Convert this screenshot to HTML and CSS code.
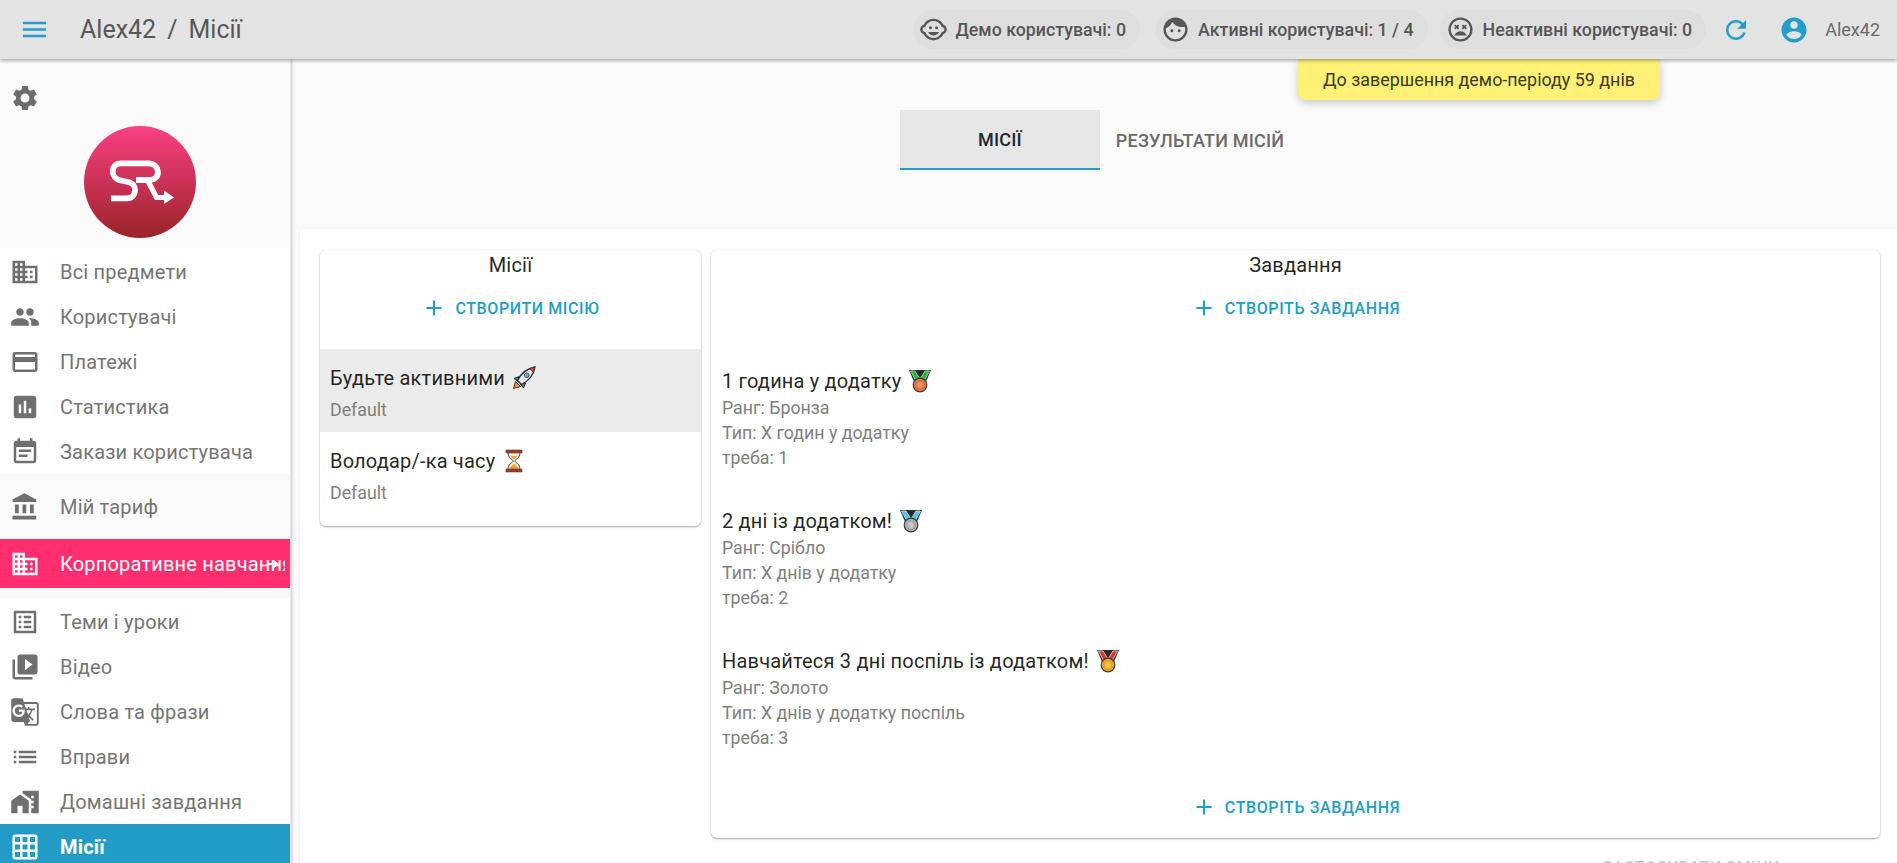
FILE: index.html
```html
<!DOCTYPE html>
<html lang="uk">
<head>
    <meta charset="UTF-8">
    <meta name="viewport" content="width=device-width, initial-scale=1.0">
    <title>Місії</title>
    <link rel="stylesheet" href="styles.css">
</head>
<body>
    <header class="topbar">
        <svg class="menu-icon" viewBox="0 0 24 24"><path d="M3 18h18v-2H3v2zm0-5h18v-2H3v2zm0-7v2h18V6H3z"/></svg>
        <div class="page-title"><span>Alex42</span><span>/</span><span>Місії</span></div>
        <div class="topbar-right">
            <div class="chip chip-demo">
                <svg viewBox="0 0 24 24"><circle cx="14.5" cy="10.5" r="1.25"/><circle cx="9.5" cy="10.5" r="1.25"/><path d="M16.5 14h-9c.76 1.77 2.49 3 4.5 3s3.74-1.23 4.5-3z"/><path d="M22.94 12.66c.04-.21.06-.43.06-.66s-.02-.45-.06-.66c-.25-1.51-1.36-2.74-2.81-3.17-.53-1.12-1.28-2.1-2.19-2.91C16.36 3.85 14.28 3 12 3s-4.36.85-5.94 2.26c-.92.81-1.67 1.8-2.19 2.91-1.45.43-2.56 1.65-2.81 3.17-.04.21-.06.43-.06.66s.02.45.06.66c.25 1.51 1.36 2.74 2.81 3.17.52 1.11 1.27 2.09 2.17 2.89C7.62 20.14 9.71 21 12 21s4.38-.86 5.97-2.28c.9-.8 1.65-1.79 2.17-2.89 1.44-.43 2.55-1.65 2.8-3.17zM19 14c-.1 0-.19-.02-.29-.03-.2.67-.49 1.29-.86 1.86C16.6 17.74 14.45 19 12 19s-4.6-1.26-5.85-3.17c-.37-.57-.66-1.19-.86-1.86-.1.01-.19.03-.29.03-1.1 0-2-.9-2-2s.9-2 2-2c.1 0 .19.02.29.03.2-.67.49-1.29.86-1.86C7.4 6.26 9.55 5 12 5s4.6 1.26 5.85 3.17c.37.57.66 1.19.86 1.86.1-.01.19-.03.29-.03 1.1 0 2 .9 2 2s-.9 2-2 2z"/></svg>
                <span>Демо користувачі: 0</span>
            </div>
            <div class="chip chip-active">
                <svg viewBox="0 0 24 24"><path d="M9 11.75c-.69 0-1.25.56-1.25 1.25s.56 1.25 1.25 1.25 1.25-.56 1.25-1.25-.56-1.25-1.25-1.25zm6 0c-.69 0-1.25.56-1.25 1.25s.56 1.25 1.25 1.25 1.25-.56 1.25-1.25-.56-1.25-1.25-1.25zM12 2C6.48 2 2 6.48 2 12s4.48 10 10 10 10-4.48 10-10S17.52 2 12 2zm0 18c-4.41 0-8-3.59-8-8 0-.29.02-.58.05-.86 2.36-1.05 4.23-2.98 5.21-5.37C11.07 8.33 14.05 10 17.42 10c.78 0 1.53-.09 2.25-.26.21.71.33 1.47.33 2.26 0 4.41-3.59 8-8 8z"/></svg>
                <span>Активні користувачі: 1 / 4</span>
            </div>
            <div class="chip chip-inactive">
                <svg viewBox="0 0 24 24"><path d="M12 13.5c-2.33 0-4.31 1.46-5.11 3.5h10.22c-.8-2.04-2.78-3.5-5.11-3.5zM7.82 12l1.06-1.06L9.94 12 11 10.94 9.94 9.88 11 8.82 9.94 7.76 8.88 8.82 7.82 7.76 6.76 8.82l1.06 1.06-1.06 1.06zm4.17-10C6.47 2 2 6.47 2 12s4.47 10 9.99 10S22 17.53 22 12 17.51 2 11.99 2zM12 20c-4.42 0-8-3.58-8-8s3.58-8 8-8 8 3.58 8 8-3.58 8-8 8zm4.18-12.24l-1.06 1.06-1.06-1.06L13 8.82l1.06 1.06L13 10.94 14.06 12l1.06-1.06L16.18 12l1.06-1.06-1.06-1.06 1.06-1.06z"/></svg>
                <span>Неактивні користувачі: 0</span>
            </div>
            <svg class="refresh-icon" viewBox="0 0 24 24"><path d="M17.65 6.35C16.2 4.9 14.21 4 12 4c-4.42 0-7.99 3.58-7.99 8s3.57 8 7.99 8c3.73 0 6.84-2.55 7.73-6h-2.08c-.82 2.33-3.04 4-5.65 4-3.31 0-6-2.69-6-6s2.69-6 6-6c1.66 0 3.14.69 4.22 1.78L13 11h7V4l-2.35 2.35z"/></svg>
            <svg class="account-icon" viewBox="0 0 24 24"><path d="M12 2C6.48 2 2 6.48 2 12s4.48 10 10 10 10-4.48 10-10S17.52 2 12 2zm0 3c1.66 0 3 1.34 3 3s-1.34 3-3 3-3-1.34-3-3 1.34-3 3-3zm0 14.2c-2.5 0-4.71-1.28-6-3.22.03-1.99 4-3.08 6-3.08 1.99 0 5.97 1.09 6 3.08-1.29 1.94-3.5 3.22-6 3.22z"/></svg>
            <span class="account-name">Alex42</span>
        </div>
    </header>

    <div class="demo-notice">До завершення демо-періоду 59 днів</div>

    <div class="layout">
        <aside class="sidebar">
            <div class="sidebar-head">
                <svg class="settings-icon" viewBox="0 0 24 24"><path d="M19.14 12.94c.04-.3.06-.61.06-.94 0-.32-.02-.64-.07-.94l2.03-1.58c.18-.14.23-.41.12-.61l-1.92-3.32c-.12-.22-.37-.29-.59-.22l-2.39.96c-.5-.38-1.03-.7-1.62-.94l-.36-2.54c-.04-.24-.24-.41-.48-.41h-3.84c-.24 0-.43.17-.47.41l-.36 2.54c-.59.24-1.13.57-1.62.94l-2.39-.96c-.22-.08-.47 0-.59.22L2.74 8.87c-.12.21-.08.47.12.61l2.03 1.58c-.05.3-.09.63-.09.94s.02.64.07.94l-2.03 1.58c-.18.14-.23.41-.12.61l1.92 3.32c.12.22.37.29.59.22l2.39-.96c.5.38 1.03.7 1.62.94l.36 2.54c.05.24.24.41.48.41h3.84c.24 0 .44-.17.47-.41l.36-2.54c.59-.24 1.13-.56 1.62-.94l2.39.96c.22.08.47 0 .59-.22l1.92-3.32c.12-.22.07-.47-.12-.61l-2.01-1.58zM12 15.6c-1.98 0-3.6-1.62-3.6-3.6s1.62-3.6 3.6-3.6 3.6 1.62 3.6 3.6-1.62 3.6-3.6 3.6z"/></svg>
                <svg class="logo" viewBox="0 0 112 112">
                    <defs>
                        <linearGradient id="logo-bg" x1="0" y1="0" x2="0" y2="1">
                            <stop offset="0" stop-color="#fb3f84"/>
                            <stop offset="1" stop-color="#9a2428"/>
                        </linearGradient>
                    </defs>
                    <circle cx="56" cy="56" r="56" fill="url(#logo-bg)"/>
                    <path d="M27 72.300H43C53 72.300 54 57.500 44 56L37 54.500C26 52.500 26 37.300 37 37.300H64C76.500 37.300 77.500 54 65.500 54H52" fill="none" stroke="#fff" stroke-width="5.800"/>
                    <path d="M63.500 54L72.500 71.500H82" fill="none" stroke="#fff" stroke-width="5.200"/>
                    <path d="M80 64.500L90 71.500L80 78Z" fill="#fff"/>
                </svg>
            </div>

            <nav class="menu-group">
                <a class="menu-item"><svg viewBox="0 0 24 24"><path d="M12 7V3H2v18h20V7H12zM6 19H4v-2h2v2zm0-4H4v-2h2v2zm0-4H4V9h2v2zm0-4H4V5h2v2zm4 12H8v-2h2v2zm0-4H8v-2h2v2zm0-4H8V9h2v2zm0-4H8V5h2v2zm10 12h-8v-2h2v-2h-2v-2h2v-2h-2V9h8v10zm-2-8h-2v2h2v-2zm0 4h-2v2h2v-2z"/></svg><span>Всі предмети</span></a>
                <a class="menu-item"><svg viewBox="0 0 24 24"><path d="M16 11c1.66 0 2.99-1.34 2.99-3S17.66 5 16 5c-1.66 0-3 1.34-3 3s1.34 3 3 3zm-8 0c1.66 0 2.99-1.34 2.99-3S9.66 5 8 5C6.34 5 5 6.34 5 8s1.34 3 3 3zm0 2c-2.33 0-7 1.17-7 3.5V19h14v-2.5c0-2.33-4.67-3.5-7-3.5zm8 0c-.29 0-.62.02-.97.05 1.16.84 1.97 1.97 1.97 3.45V19h6v-2.5c0-2.33-4.67-3.5-7-3.5z"/></svg><span>Користувачі</span></a>
                <a class="menu-item"><svg viewBox="0 0 24 24"><path d="M20 4H4c-1.11 0-1.99.89-1.99 2L2 18c0 1.11.89 2 2 2h16c1.11 0 2-.89 2-2V6c0-1.11-.89-2-2-2zm0 14H4v-6h16v6zm0-10H4V6h16v2z"/></svg><span>Платежі</span></a>
                <a class="menu-item"><svg viewBox="0 0 24 24"><path d="M19 3H5c-1.1 0-2 .9-2 2v14c0 1.1.9 2 2 2h14c1.1 0 2-.9 2-2V5c0-1.1-.9-2-2-2zM9 17H7v-7h2v7zm4 0h-2V7h2v10zm4 0h-2v-4h2v4z"/></svg><span>Статистика</span></a>
                <a class="menu-item"><svg viewBox="0 0 24 24"><path d="M17 10H7v2h10v-2zm2-7h-1V1h-2v2H8V1H6v2H5c-1.11 0-1.99.9-1.99 2L3 19c0 1.1.89 2 2 2h14c1.1 0 2-.9 2-2V5c0-1.1-.9-2-2-2zm0 16H5V8h14v11zm-5-5H7v2h7v-2z"/></svg><span>Закази користувача</span></a>
            </nav>

            <div class="menu-plan">
                <a class="menu-item"><svg viewBox="0 0 24 24"><path d="M4 10v7h3v-7H4zm6 0v7h3v-7h-3zM2 22h19v-3H2v3zm14-12v7h3v-7h-3zm-4.5-9L2 6v2h19V6l-9.5-5z"/></svg><span>Мій тариф</span></a>
            </div>

            <a class="menu-item menu-corporate">
                <svg viewBox="0 0 24 24"><path d="M12 7V3H2v18h20V7H12zM6 19H4v-2h2v2zm0-4H4v-2h2v2zm0-4H4V9h2v2zm0-4H4V5h2v2zm4 12H8v-2h2v2zm0-4H8v-2h2v2zm0-4H8V9h2v2zm0-4H8V5h2v2zm10 12h-8v-2h2v-2h-2v-2h2v-2h-2V9h8v10zm-2-8h-2v2h2v-2zm0 4h-2v2h2v-2z"/></svg>
                <span>Корпоративне навчання</span>
                <svg class="corporate-arrow" viewBox="0 0 12 8"><path d="M0 3h7V0l5 4-5 4V5H0z"/></svg>
            </a>
            <div class="menu-spacer"></div>

            <nav class="menu-group">
                <a class="menu-item"><svg viewBox="0 0 24 24"><path d="M19 5v14H5V5h14m1.1-2H3.9c-.5 0-.9.4-.9.9v16.2c0 .4.4.9.9.9h16.2c.4 0 .9-.5.9-.9V3.9c0-.5-.5-.9-.9-.9zM11 7h6v2h-6V7zm0 4h6v2h-6v-2zm0 4h6v2h-6zM7 7h2v2H7zm0 4h2v2H7zm0 4h2v2H7z"/></svg><span>Теми і уроки</span></a>
                <a class="menu-item"><svg viewBox="0 0 24 24"><path d="M4 6H2v14c0 1.1.9 2 2 2h14v-2H4V6zm16-4H8c-1.1 0-2 .9-2 2v12c0 1.1.9 2 2 2h12c1.1 0 2-.9 2-2V4c0-1.1-.9-2-2-2zm-8 12.5v-9l6 4.5-6 4.5z"/></svg><span>Відео</span></a>
                <a class="menu-item"><svg viewBox="0 0 24 24"><path d="M21 4H11l-1-3H3c-1.1 0-2 .9-2 2v15c0 1.1.9 2 2 2h8l1 3h9c1.1 0 2-.9 2-2V6c0-1.1-.9-2-2-2zM7 16c-2.76 0-5-2.24-5-5s2.24-5 5-5c1.35 0 2.48.5 3.35 1.3L9.03 8.57c-.38-.36-1.04-.78-2.03-.78-1.74 0-3.15 1.44-3.15 3.21S5.26 14.21 7 14.21c2.01 0 2.84-1.44 2.92-2.41H7v-1.71h4.68c.07.31.12.61.12 1.02C11.8 13.97 9.89 16 7 16zm6.17-5.42h3.7c-.43 1.25-1.11 2.43-2.05 3.47-.31-.35-.6-.72-.86-1.1l-.79-2.37zm8.33 9.92c0 .55-.45 1-1 1H14l2-2.5-1.04-3.1 3.1 3.1.92-.92-3.3-3.25.02-.02c1.13-1.25 1.93-2.69 2.4-4.22H20v-1.3h-4.53V8h-1.29v1.29h-1.44L11.46 5.5h9.04c.55 0 1 .45 1 1v14z"/></svg><span>Слова та фрази</span></a>
                <a class="menu-item"><svg viewBox="0 0 24 24"><path d="M3 13h2v-2H3v2zm0 4h2v-2H3v2zm0-8h2V7H3v2zm4 4h14v-2H7v2zm0 4h14v-2H7v2zM7 7v2h14V7H7z"/></svg><span>Вправи</span></a>
                <a class="menu-item"><svg viewBox="0 0 24 24"><path d="M1 11v10h5v-6h4v6h5V11L8 6z"/><path d="M10 3v1.97l7 5V11h2v2h-2v2h2v2h-2v4h6V3H10zm9 6h-2V7h2v2z"/></svg><span>Домашні завдання</span></a>
            </nav>

            <a class="menu-item menu-active"><svg viewBox="0 0 24 24"><path d="M20 2H4c-1.1 0-2 .9-2 2v16c0 1.1.9 2 2 2h16c1.1 0 2-.9 2-2V4c0-1.1-.9-2-2-2zM8 20H4v-4h4v4zm0-6H4v-4h4v4zm0-6H4V4h4v4zm6 12h-4v-4h4v4zm0-6h-4v-4h4v4zm0-6h-4V4h4v4zm6 12h-4v-4h4v4zm0-6h-4v-4h4v4zm0-6h-4V4h4v4z"/></svg><span>Місії</span></a>
        </aside>

        <main class="content">
            <div class="tabs">
                <div class="tab tab-selected">Місії</div>
                <div class="tab">Результати місій</div>
            </div>

            <section class="panel">
                <div class="panel-columns">
                    <div class="card card-missions">
                        <div class="card-title">Місії</div>
                        <button class="add-button"><svg viewBox="0 0 24 24"><path d="M19 13h-6v6h-2v-6H5v-2h6V5h2v6h6v2z"/></svg>Створити місію</button>
                        <ul class="mission-list">
                            <li class="mission mission-selected">
                                <div class="mission-name">Будьте активними
                                    <svg class="emoji" viewBox="0 0 24 24">
                                        <path d="M1.500 22.500l2-7 5 5z" fill="#f2952a" stroke="#5a3320" stroke-width="1"/>
                                        <path d="M7 10.500l-5 2 4 3zM13.500 17l-2 5-3-4z" fill="#3a7fc4" stroke="#2b2b2b" stroke-width="1"/>
                                        <path d="M5.500 14.500C9 7.500 15 2.500 23 1c-1.500 8-6.500 14-13.500 17.500z" fill="#e3e9ef" stroke="#2b2b2b" stroke-width="1.300"/>
                                        <path d="M17.500 2.600L23 1l-1.600 5.500z" fill="#e0393e" stroke="#2b2b2b" stroke-width=".6"/>
                                        <circle cx="14.700" cy="9.300" r="2.400" fill="#7fa8cf" stroke="#4a4a4a" stroke-width=".9"/>
                                    </svg>
                                </div>
                                <div class="mission-type">Default</div>
                            </li>
                            <li class="mission">
                                <div class="mission-name">Володар/-ка часу
                                    <svg class="emoji" viewBox="0 0 24 24">
                                        <path d="M6 3c0 7 5 7 5 9s-5 2-5 9h12c0-7-5-7-5-9s5-2 5-9z" fill="#fdeccf" stroke="#444" stroke-width="1"/>
                                        <path d="M7.500 20c.5-3 3-4 4.500-5 1.500 1 4 2 4.500 5zM9 7h6c-1 2-2 3-3 3.500-1-.5-2-1.500-3-3.500z" fill="#e8a33d"/>
                                        <path d="M4 1h16v3H4zM4 20h16v3H4z" fill="#a33a24" stroke="#444" stroke-width=".6"/>
                                    </svg>
                                </div>
                                <div class="mission-type">Default</div>
                            </li>
                        </ul>
                    </div>

                    <div class="card card-tasks">
                        <div class="card-title">Завдання</div>
                        <button class="add-button"><svg viewBox="0 0 24 24"><path d="M19 13h-6v6h-2v-6H5v-2h6V5h2v6h6v2z"/></svg>Створіть завдання</button>
                        <ul class="task-list">
                            <li class="task">
                                <div class="task-name">1 година у додатку
                                    <svg class="emoji medal-bronze" viewBox="0 0 24 24">
                                        <path class="medal-back" d="M1 1h22l-6 14H7z"/>
                                        <path class="medal-band" d="M2.500 2H7l5 8 5-8h4.500L15.500 13h-7z"/>
                                        <circle class="medal-disc" cx="12" cy="16" r="6.800"/>
                                        <circle class="medal-inner" cx="12" cy="16" r="3"/>
                                    </svg>
                                </div>
                                <div class="task-line">Ранг: Бронза</div>
                                <div class="task-line">Тип: Х годин у додатку</div>
                                <div class="task-line">треба: 1</div>
                            </li>
                            <li class="task">
                                <div class="task-name">2 дні із додатком!
                                    <svg class="emoji medal-silver" viewBox="0 0 24 24">
                                        <path class="medal-back" d="M1 1h22l-6 14H7z"/>
                                        <path class="medal-band" d="M2.500 2H7l5 8 5-8h4.500L15.500 13h-7z"/>
                                        <circle class="medal-disc" cx="12" cy="16" r="6.800"/>
                                        <circle class="medal-inner" cx="12" cy="16" r="3"/>
                                    </svg>
                                </div>
                                <div class="task-line">Ранг: Срібло</div>
                                <div class="task-line">Тип: Х днів у додатку</div>
                                <div class="task-line">треба: 2</div>
                            </li>
                            <li class="task">
                                <div class="task-name">Навчайтеся 3 дні поспіль із додатком!
                                    <svg class="emoji medal-gold" viewBox="0 0 24 24">
                                        <path class="medal-back" d="M1 1h22l-6 14H7z"/>
                                        <path class="medal-band" d="M2.500 2H7l5 8 5-8h4.500L15.500 13h-7z"/>
                                        <circle class="medal-disc" cx="12" cy="16" r="6.800"/>
                                        <circle class="medal-inner" cx="12" cy="16" r="3"/>
                                    </svg>
                                </div>
                                <div class="task-line">Ранг: Золото</div>
                                <div class="task-line">Тип: Х днів у додатку поспіль</div>
                                <div class="task-line">треба: 3</div>
                            </li>
                        </ul>
                        <button class="add-button"><svg viewBox="0 0 24 24"><path d="M19 13h-6v6h-2v-6H5v-2h6V5h2v6h6v2z"/></svg>Створіть завдання</button>
                    </div>
                </div>
                <div class="panel-actions">
                    <button class="save-button" disabled>Застосувати зміни</button>
                </div>
            </section>
        </main>
    </div>
</body>
</html>
```

FILE: styles.css
```css
* {
    box-sizing: border-box;
}

html,
body {
    height: 100%;
}

body {
    margin: 0;
    height: 863px;
    overflow: hidden;
    display: flex;
    flex-direction: column;
    font-family: Roboto, "Noto Sans", sans-serif;
    font-size: 18px;
    color: rgba(0, 0, 0, 0.87);
    background-color: #fafafa;
}

svg {
    fill: currentColor;
    flex-shrink: 0;
}

ul {
    list-style: none;
    margin: 0;
    padding: 0;
}

/* top bar */
.topbar {
    position: relative;
    z-index: 3;
    display: flex;
    align-items: center;
    flex-shrink: 0;
    height: 59px;
    padding: 0 17px 0 19px;
    background-color: #e3e3e3;
    box-shadow: 0 1px 4px rgba(0, 0, 0, 0.45);
}

.menu-icon {
    width: 31px;
    height: 31px;
    color: #239dc9;
}

.page-title {
    display: flex;
    gap: 11px;
    margin-left: 30px;
    font-size: 25px;
    color: #575757;
}

.topbar-right {
    display: flex;
    align-items: center;
    margin-left: auto;
}

.chip {
    display: flex;
    align-items: center;
    gap: 8px;
    height: 39px;
    padding: 0 14px 0 6px;
    border-radius: 20px;
    background-color: #dedede;
    color: #565656;
    font-size: 17.8px;
    font-weight: 500;
    white-space: nowrap;
}

.chip svg {
    width: 29px;
    height: 29px;
}

.chip-active {
    margin-left: 15px;
}

.chip-inactive {
    margin-left: 12px;
}

.refresh-icon {
    width: 30px;
    height: 30px;
    margin-left: 15px;
    color: #239dc9;
}

.account-icon {
    width: 30px;
    height: 30px;
    margin-left: 28px;
    color: #239dc9;
}

.account-name {
    margin-left: 16px;
    font-size: 18px;
    color: #6a6a6a;
}

.demo-notice {
    position: absolute;
    z-index: 2;
    top: 59px;
    right: 237px;
    display: flex;
    align-items: center;
    height: 41px;
    padding: 0 25px;
    border-radius: 0 0 8px 8px;
    background-color: #fff176;
    box-shadow: 0 3px 8px rgba(0, 0, 0, 0.2);
    font-size: 17.9px;
    color: #3b3a22;
}

/* sidebar */
.layout {
    display: flex;
    flex: 1;
    min-height: 0;
}

.sidebar {
    display: flex;
    flex-direction: column;
    flex-shrink: 0;
    width: 291px;
    overflow: hidden;
    border-right: 1px solid #e6e6e6;
    background-color: #fff;
    box-shadow: 1px 0 3px rgba(0, 0, 0, 0.2);
}

.sidebar > * {
    flex-shrink: 0;
}

.sidebar-head {
    height: 189px;
    padding: 24px 0 0 10px;
    background-color: #fafafa;
}

.settings-icon {
    display: block;
    width: 30px;
    height: 30px;
    color: #6b6b6b;
}

.logo {
    display: block;
    width: 112px;
    height: 112px;
    margin: 13px 0 0 74px;
}

.menu-group {
    padding-top: 1px;
}

.menu-item {
    display: flex;
    align-items: center;
    gap: 20px;
    height: 45px;
    padding-left: 10px;
    font-size: 20px;
    letter-spacing: 0.19px;
    color: #757575;
    white-space: nowrap;
}

.menu-item svg {
    width: 30px;
    height: 30px;
    color: #6f6f6f;
}

.menu-plan {
    background-color: #fafafa;
}

.menu-plan .menu-item {
    height: 65px;
}

.menu-corporate {
    position: relative;
    height: 49px;
    overflow: hidden;
    padding-right: 5px;
    background-color: #ff2f6f;
    color: #fff;
}

.menu-corporate svg {
    color: #fff;
}

.menu-corporate span {
    overflow: hidden;
}

.menu-corporate .corporate-arrow {
    position: absolute;
    top: 21px;
    left: 267px;
    width: 12px;
    height: 8px;
}

.menu-spacer {
    height: 10px;
    background-color: #fafafa;
}

.menu-active {
    height: 46px;
    background-color: #239bc7;
    color: #fff;
    font-weight: 700;
}

.menu-active svg {
    color: #fff;
}

/* main area */
.content {
    flex: 1;
    min-width: 0;
    display: flex;
    flex-direction: column;
    padding-left: 9px;
}

.tabs {
    display: flex;
    flex-shrink: 0;
    justify-content: center;
    height: 170px;
    padding: 51px 0 0 3px;
}

.tab {
    display: flex;
    align-items: center;
    justify-content: center;
    width: 200px;
    height: 60px;
    font-size: 18px;
    font-weight: 500;
    letter-spacing: 0.2px;
    text-transform: uppercase;
    color: #6b6b6b;
}

.tab-selected {
    border-bottom: 2px solid #239dc9;
    background-color: #e6e6e6;
    color: #1d2733;
}

.panel {
    flex: 1;
    padding: 21px 17px 0 20px;
    border-radius: 4px 0 0 0;
    background-color: #fff;
    box-shadow: 0 0 3px rgba(0, 0, 0, 0.06);
}

.panel-columns {
    display: flex;
    align-items: flex-start;
    gap: 10px;
}

.card {
    padding-top: 1px;
    border-radius: 6px;
    background-color: #fff;
    box-shadow: 0 1px 2px rgba(0, 0, 0, 0.35), 0 0 2px rgba(0, 0, 0, 0.08);
}

.card-missions {
    width: 381px;
    padding-bottom: 11px;
}

.card-tasks {
    flex: 1;
    padding-bottom: 10px;
}

.card-title {
    height: 28px;
    font-size: 20px;
    letter-spacing: 0.19px;
    line-height: 28px;
    text-align: center;
}

.add-button {
    display: flex;
    align-items: center;
    justify-content: center;
    gap: 8px;
    width: 100%;
    height: 42px;
    margin-top: 8px;
    padding: 0;
    border: none;
    background: none;
    font-family: inherit;
    font-size: 16px;
    font-weight: 500;
    letter-spacing: 0.6px;
    text-transform: uppercase;
    color: #239dc9;
}

.add-button svg {
    width: 26px;
    height: 26px;
}

.mission-list {
    margin-top: 20px;
}

.mission {
    height: 83px;
    padding: 15px 10px 0;
}

.mission-selected {
    background-color: #ebebeb;
}

.mission-name {
    display: flex;
    align-items: center;
    gap: 7px;
    height: 27px;
    font-size: 20px;
    letter-spacing: 0.19px;
}

.mission-type {
    margin-top: 7px;
    font-size: 17.8px;
    line-height: 24px;
    color: #7f7f7f;
}

.emoji {
    width: 24px;
    height: 24px;
}

.task-list {
    margin-top: 38px;
    padding: 0 11px;
}

.task {
    padding-bottom: 37px;
}

.task-name {
    display: flex;
    align-items: center;
    gap: 7px;
    height: 28px;
    font-size: 20px;
    letter-spacing: 0.19px;
}

.task-line {
    font-size: 17.8px;
    line-height: 25px;
    color: #7f7f7f;
}

.card-tasks .add-button:last-child {
    margin-top: -1px;
}

.medal-back {
    fill: #2b2b2b;
}

.medal-band {
    fill: #2fb344;
    stroke: #9be8a0;
    stroke-width: 0.8;
}

.medal-disc {
    fill: #d9773d;
    stroke: #3a3a3a;
    stroke-width: 1.2;
}

.medal-inner {
    fill: #e8915a;
}

.medal-silver .medal-band {
    fill: #4ec3ee;
    stroke: #bfeaff;
}

.medal-silver .medal-disc {
    fill: #a8a8a8;
}

.medal-silver .medal-inner {
    fill: #c6c6c6;
}

.medal-gold .medal-band {
    fill: #d9362f;
    stroke: #f6e0d0;
}

.medal-gold .medal-disc {
    fill: #e6a823;
}

.medal-gold .medal-inner {
    fill: #f2c146;
}

.panel-actions {
    display: flex;
    justify-content: flex-end;
    margin-top: 18px;
    padding-right: 100px;
}

.save-button {
    padding: 0;
    border: none;
    background: none;
    font-family: inherit;
    font-size: 16px;
    font-weight: 500;
    letter-spacing: 0.6px;
    line-height: 24px;
    text-transform: uppercase;
    color: #c8c8c8;
}
```
